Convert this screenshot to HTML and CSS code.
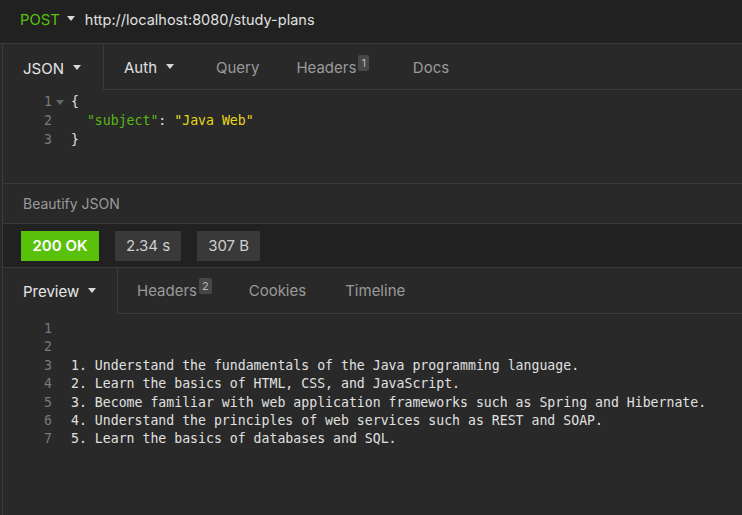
FILE: index.html
```html
<!DOCTYPE html>
<html>
<head>
<meta charset="utf-8">
<link rel="stylesheet" href="styles.css">
</head>
<body>
<div class="urlbar">
  <span class="method">POST</span>
  <span class="caret caret-url"></span>
  <span class="url">http://localhost:8080/study-plans</span>
</div>
<div class="app">
  <div class="tabs tabs-req">
    <div class="tab active tab-json">JSON <span class="caret"></span></div>
    <div class="tab-rest">
      <div class="tab tab-auth">Auth <span class="caret"></span></div>
      <div class="tab dim tab-query">Query</div>
      <div class="tab dim tab-headers">Headers<span class="badge">1</span></div>
      <div class="tab dim tab-docs">Docs</div>
    </div>
  </div>
  <div class="editor">
    <div class="line"><span class="ln">1<span class="fold"></span></span><span class="code">{</span></div>
    <div class="line"><span class="ln">2</span><span class="code">  <span class="key">"subject"</span>: <span class="str">"Java Web"</span></span></div>
    <div class="line"><span class="ln">3</span><span class="code">}</span></div>
  </div>
  <div class="beautify">Beautify JSON</div>
  <div class="status">
    <span class="pill ok">200 OK</span>
    <span class="pill">2.34 s</span>
    <span class="pill">307 B</span>
  </div>
  <div class="tabs">
    <div class="tab active tab-preview">Preview <span class="caret"></span></div>
    <div class="tab-rest">
      <div class="tab dim tab-rheaders">Headers<span class="badge">2</span></div>
      <div class="tab dim tab-cookies">Cookies</div>
      <div class="tab dim tab-timeline">Timeline</div>
    </div>
  </div>
  <div class="response">
    <div class="line"><span class="ln">1</span><span class="code"></span></div>
    <div class="line"><span class="ln">2</span><span class="code"></span></div>
    <div class="line"><span class="ln">3</span><span class="code">1. Understand the fundamentals of the Java programming language.</span></div>
    <div class="line"><span class="ln">4</span><span class="code">2. Learn the basics of HTML, CSS, and JavaScript.</span></div>
    <div class="line"><span class="ln">5</span><span class="code">3. Become familiar with web application frameworks such as Spring and Hibernate.</span></div>
    <div class="line"><span class="ln">6</span><span class="code">4. Understand the principles of web services such as REST and SOAP.</span></div>
    <div class="line"><span class="ln">7</span><span class="code">5. Learn the basics of databases and SQL.</span></div>
  </div>
</div>
</body>
</html>
```
FILE: styles.css
```css
* { box-sizing: border-box; }
html, body {
  margin: 0;
  padding: 0;
  height: 100%;
  background: #292929;
  font-family: Inter, "Noto Sans", sans-serif;
  font-size: 14.5px;
  color: #dcdcdc;
  overflow: hidden;
}
.urlbar {
  height: 44px;
  background: #212121;
  border-bottom: 1px solid #3a3a3a;
  display: flex;
  align-items: center;
  padding-left: 20px;
  padding-bottom: 4px;
}
.method { color: #59c10a; font-size: 14.8px; }
.caret {
  display: inline-block;
  width: 0;
  height: 0;
  border-left: 4.5px solid transparent;
  border-right: 4.5px solid transparent;
  border-top: 5px solid #d8d8d8;
  vertical-align: middle;
  margin-left: 5px;
  position: relative;
  top: -1px;
}
.caret-url { margin-left: 7px; margin-right: 10px; }
.url { color: #e0e0e0; }
.app {
  margin-left: 2px;
  border-left: 1px solid #3a3a3a;
  height: calc(100% - 44px);
  display: flex;
  flex-direction: column;
}
.tabs {
  height: 46px;
  display: flex;
  flex: none;
  font-size: 15px;
}
.tabs-req .tab { padding-top: 2px; }
.tab {
  display: flex;
  align-items: center;
  white-space: nowrap;
}
.tab.active {
  border-right: 1px solid #3a3a3a;
  padding-left: 20px;
  color: #e6e6e6;
}
.tab-json { width: 101px; }
.tab-preview { width: 115px; }
.tab-rest {
  flex: 1;
  display: flex;
  border-bottom: 1px solid #3a3a3a;
}
.tab.dim { color: #9a9a9a; }
.tab-auth { margin-left: 20px; color: #e0e0e0; }
.tab-query { margin-left: 42px; }
.tab-headers { margin-left: 37px; }
.tab-docs { margin-left: 44px; }
.tab-rheaders { margin-left: 19px; }
.tab-cookies { margin-left: 37px; }
.tab-timeline { margin-left: 39px; }
.tab .caret { margin-left: 9px; }
.badge {
  align-self: flex-start;
  margin-top: 10px;
  margin-left: 2px;
  background: #474747;
  color: #b8b8b8;
  font-size: 11px;
  line-height: 16px;
  padding: 0 3px;
  border-radius: 2px;
}
.tabs-req .badge { margin-top: 9px; }
.editor {
  height: 93px;
  flex: none;
  padding-top: 2px;
  font-family: "DejaVu Sans Mono", monospace;
  font-size: 13.2px;
}
.line {
  display: flex;
  height: 19px;
  line-height: 19px;
  white-space: pre;
}
.ln {
  width: 49px;
  text-align: right;
  color: #7a7a7a;
  position: relative;
  flex: none;
}
.fold {
  position: absolute;
  left: 53px;
  top: 8px;
  width: 0;
  height: 0;
  border-left: 4px solid transparent;
  border-right: 4px solid transparent;
  border-top: 5px solid #666;
}
.code { margin-left: 19px; color: #e0e0e0; }
.key { color: #5ab814; }
.str { color: #e8d618; }
.beautify {
  height: 40px;
  flex: none;
  border-top: 1px solid #3a3a3a;
  display: flex;
  align-items: center;
  padding-left: 20px;
  color: #9a9a9a;
  font-size: 14px;
}
.status {
  height: 45px;
  flex: none;
  background: #212121;
  border-top: 1px solid #3a3a3a;
  border-bottom: 1px solid #3a3a3a;
  display: flex;
  align-items: center;
  gap: 16px;
  padding-left: 18px;
}
.pill {
  height: 30px;
  display: flex;
  align-items: center;
  padding: 0 11px;
  background: #393939;
  color: #cfcfcf;
  font-size: 15px;
}
.pill.ok {
  background: #59c10a;
  color: #fff;
  font-weight: 600;
  padding: 0 11.5px;
}
.response {
  flex: 1;
  padding-top: 6px;
  font-family: "DejaVu Sans Mono", monospace;
  font-size: 13.2px;
}
.response .line { height: 18.4px; line-height: 18.4px; }
```
